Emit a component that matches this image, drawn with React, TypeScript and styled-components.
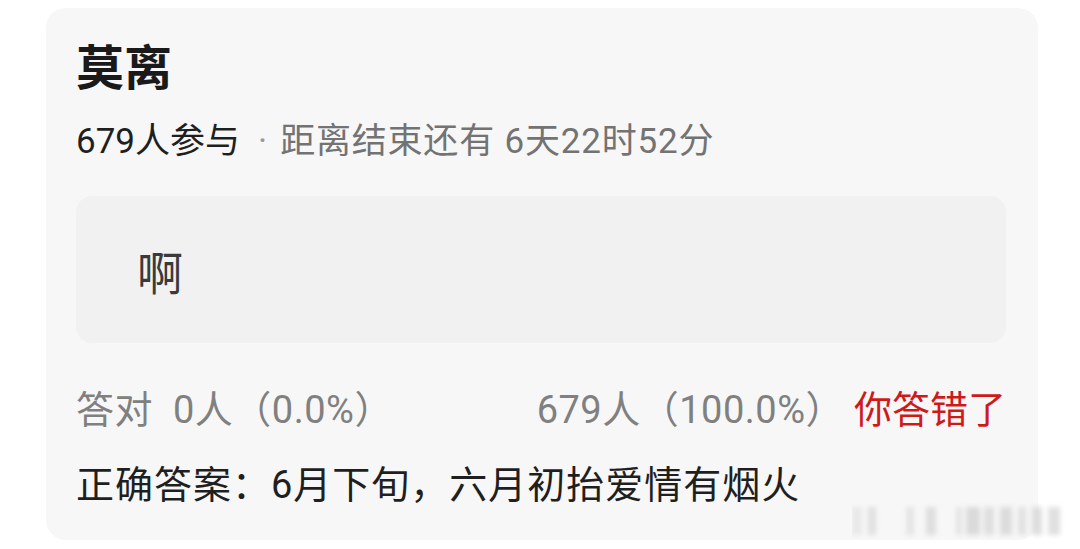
import React from "react";
import styled, { createGlobalStyle } from "styled-components";

const GlobalStyle = createGlobalStyle`
  html, body {
    margin: 0;
    padding: 0;
    background: #ffffff;
  }
  body {
    font-family: Roboto, "Noto Sans CJK SC", "Noto Sans", sans-serif;
    -webkit-font-smoothing: antialiased;
  }
`;

const Page = styled.div`
  width: 1080px;
  height: 549px;
  padding: 8px 0 0 46px;
  box-sizing: border-box;
  position: relative;
  overflow: hidden;
`;

const Card = styled.section`
  width: 992px;
  height: 532px;
  box-sizing: border-box;
  padding: 33px 32px 0 30px;
  background: #f7f7f7;
  border-radius: 20px;
  display: flex;
  flex-direction: column;
`;

const Title = styled.h1`
  margin: 0;
  font-size: 48px;
  line-height: 56px;
  font-weight: 700;
  color: #1a1a1a;
`;

const Meta = styled.div`
  margin-top: 23px;
  display: flex;
  align-items: center;
  font-size: 35px;
  line-height: 44px;
  color: #737373;
`;

const Count = styled.span`
  color: #1f1f1f;
`;

const Dot = styled.span`
  margin: 0 13px 0 18px;
  color: #9a9a9a;
`;

const Remaining = styled.span`
  letter-spacing: 0.8px;
`;

const Option = styled.div`
  margin-top: 32px;
  height: 147px;
  box-sizing: border-box;
  padding-left: 61px;
  display: flex;
  align-items: center;
  background: #f1f1f1;
  border-radius: 16px;
  font-size: 46px;
  color: #3a3a3a;
`;

const Stats = styled.div`
  margin-top: 43px;
  display: flex;
  justify-content: space-between;
  align-items: center;
  font-size: 38px;
  line-height: 48px;
  letter-spacing: 0.5px;
  color: #808080;
`;

const StatGroup = styled.div<{ $gap: number }>`
  display: flex;
  align-items: center;
  gap: ${(p) => p.$gap}px;
`;

const Verdict = styled.span<{ $wrong?: boolean }>`
  color: ${(p) => (p.$wrong ? "#cf1a1a" : "#1a9a4a")};
  letter-spacing: 0;
`;

const Answer = styled.div`
  margin-top: 27px;
  font-size: 38px;
  line-height: 48px;
  letter-spacing: 1px;
  color: #1f1f1f;
`;

const Watermark = styled.svg`
  position: absolute;
  right: 8px;
  bottom: 10px;
`;

const bars: Array<[number, number, string]> = [
  [0, 10, "#e8e8e8"],
  [16, 8, "#e0e0e0"],
  [54, 8, "#e4e4e4"],
  [74, 10, "#dedede"],
  [104, 6, "#e3e3e3"],
  [114, 14, "#dadada"],
  [132, 10, "#dfdfdf"],
  [148, 12, "#dcdcdc"],
  [166, 8, "#e1e1e1"],
  [180, 10, "#dddddd"],
  [196, 12, "#e0e0e0"],
];

export default function App() {
  return (
    <>
      <GlobalStyle />
      <Page>
        <Card>
          <Title>莫离</Title>
          <Meta>
            <Count>679人参与</Count>
            <Dot>·</Dot>
            <Remaining>距离结束还有 6天22时52分</Remaining>
          </Meta>
          <Option>啊</Option>
          <Stats>
            <StatGroup $gap={20}>
              <span>答对</span>
              <span>0人（0.0%）</span>
            </StatGroup>
            <StatGroup $gap={10}>
              <span>679人（100.0%）</span>
              <Verdict $wrong>你答错了</Verdict>
            </StatGroup>
          </Stats>
          <Answer>正确答案：6月下旬，六月初抬爱情有烟火</Answer>
        </Card>
        <Watermark width="220" height="36" viewBox="0 0 220 36">
          <defs>
            <filter id="soft" x="-20%" y="-20%" width="140%" height="140%">
              <feGaussianBlur stdDeviation="2.6" />
            </filter>
          </defs>
          <g filter="url(#soft)">
            {bars.map(([x, w, c], i) => (
              <rect key={i} x={x} y={4} width={w} height={28} fill={c} />
            ))}
          </g>
        </Watermark>
      </Page>
    </>
  );
}
